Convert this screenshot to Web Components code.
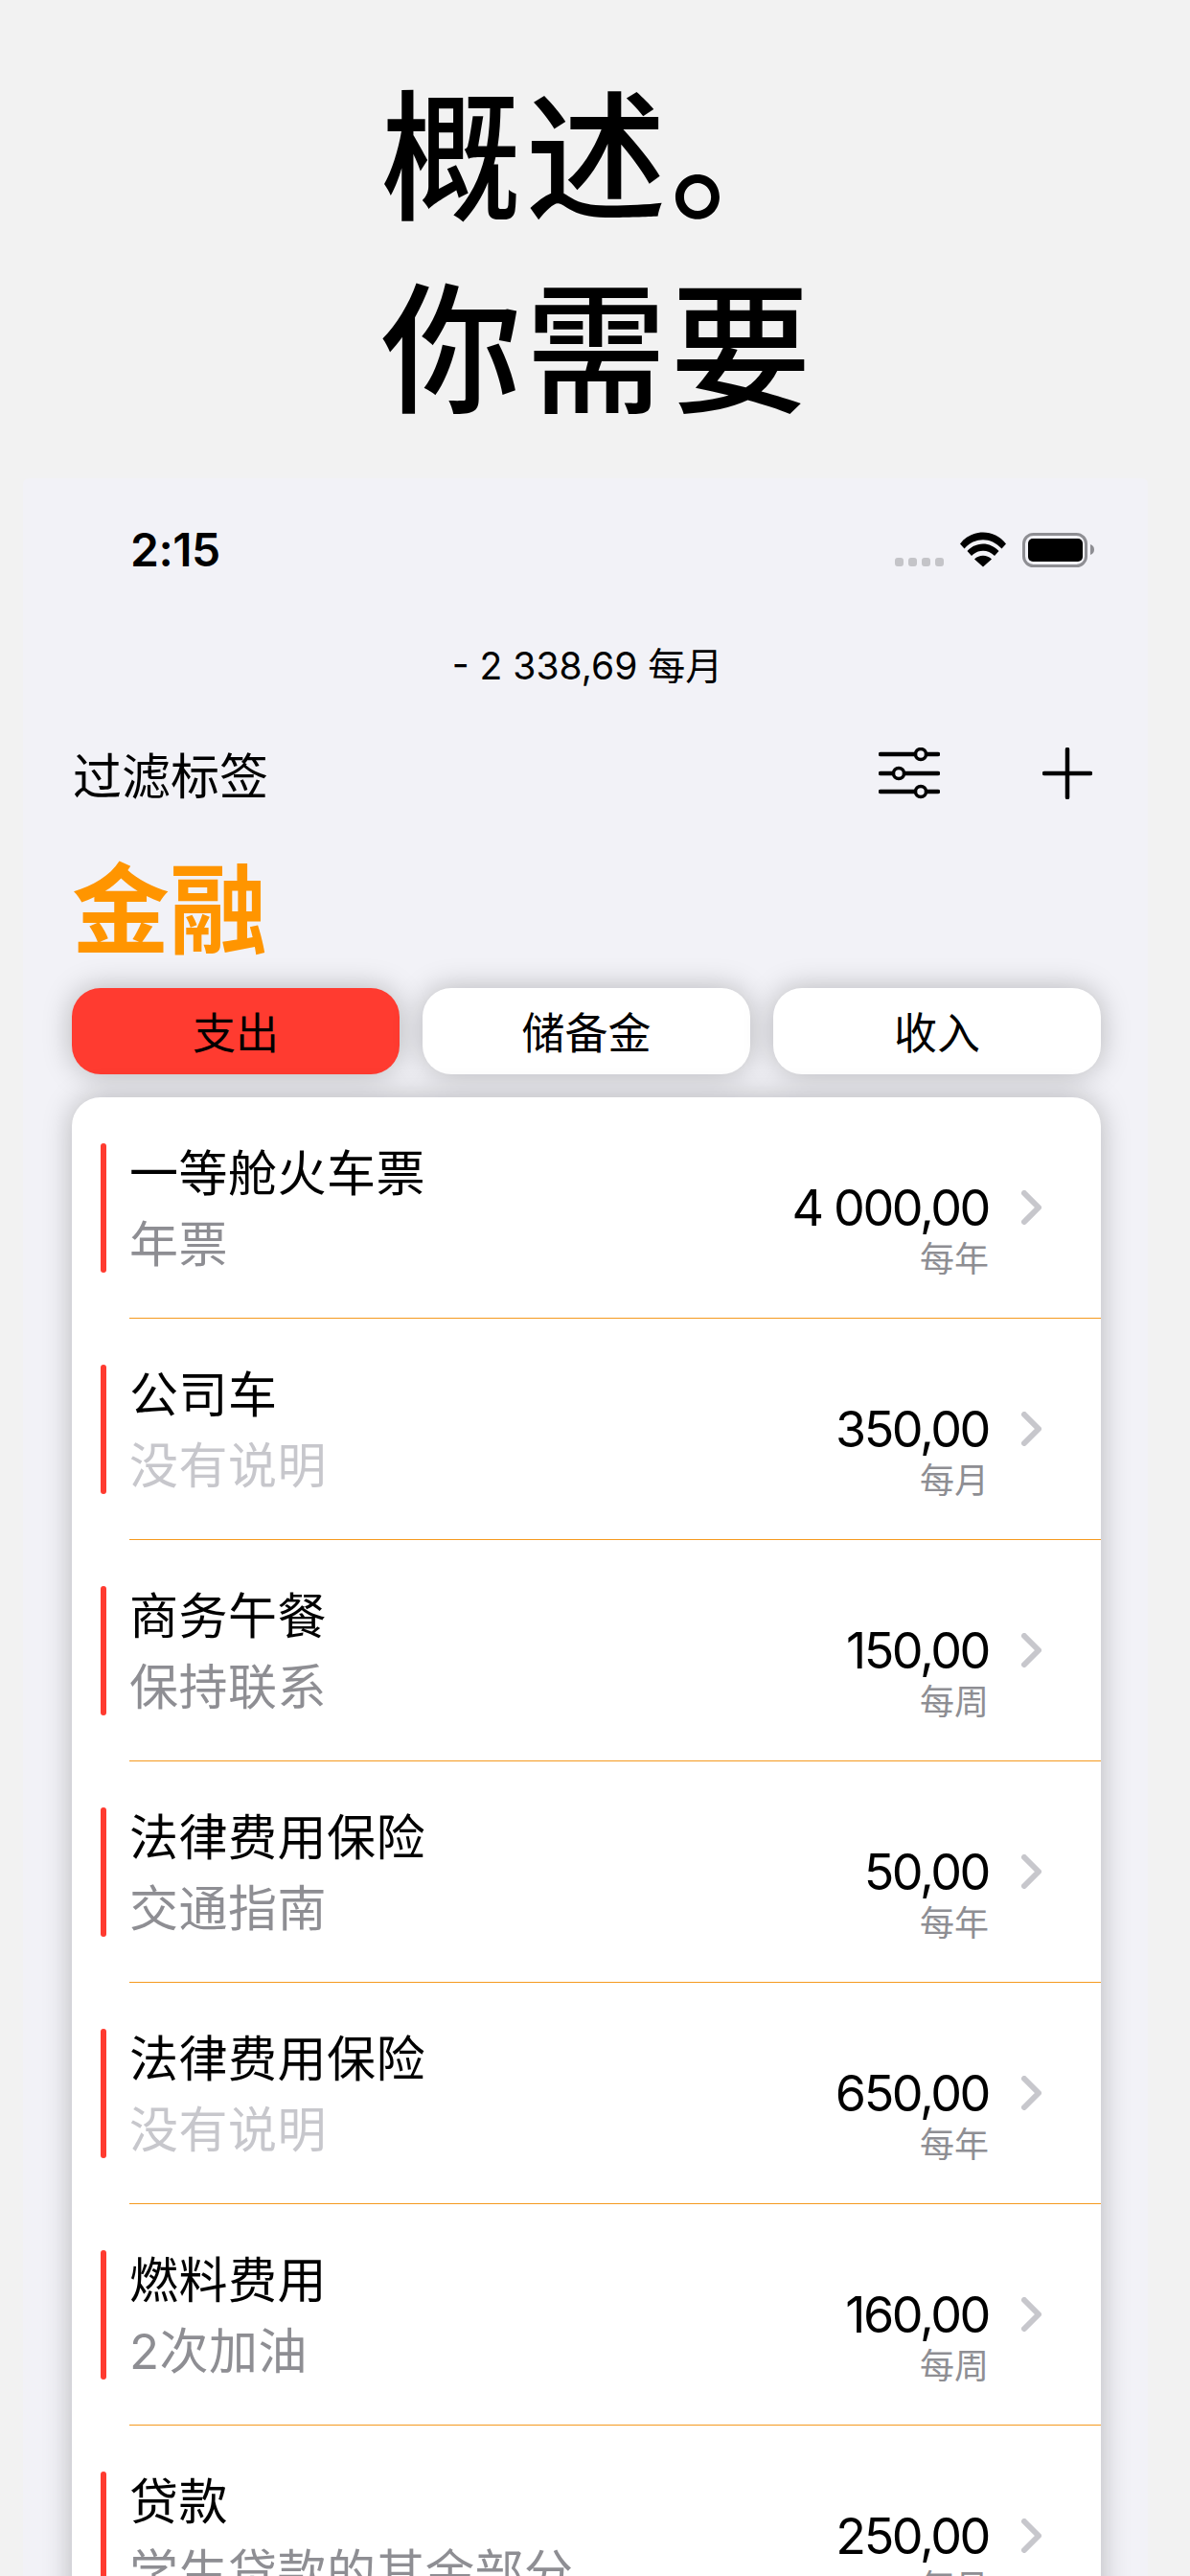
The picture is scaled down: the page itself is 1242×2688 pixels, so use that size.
<!DOCTYPE html>
<html lang="zh-CN"><head><meta charset="utf-8"><style>
html,body{margin:0;padding:0;background:#f2f2f2;height:2688px;overflow:hidden;font-family:"Noto Sans CJK SC","Liberation Sans",sans-serif}
</style></head><body>
<promo-page>
  <promo-headline slot="head"><span>概述。</span><span>你需要</span></promo-headline>
  <phone-screen slot="screen">
    <status-bar slot="status"></status-bar>
    <nav-head slot="nav"></nav-head>
    <seg-tabs slot="tabs"></seg-tabs>
    <item-list slot="list">
      <money-row title="一等舱火车票" note="年票" amount="4 000,00" period="每年"></money-row>
      <money-row title="公司车" note="没有说明" empty amount="350,00" period="每月"></money-row>
      <money-row title="商务午餐" note="保持联系" amount="150,00" period="每周"></money-row>
      <money-row title="法律费用保险" note="交通指南" amount="50,00" period="每年"></money-row>
      <money-row title="法律费用保险" note="没有说明" empty amount="650,00" period="每年"></money-row>
      <money-row title="燃料费用" note="2次加油" amount="160,00" period="每周"></money-row>
      <money-row title="贷款" note="学生贷款的其余部分" amount="250,00" period="每月"></money-row>
    </item-list>
  </phone-screen>
</promo-page>
<script>
const cjk='"Noto Sans CJK SC",sans-serif';
const sans='Inter,"Noto Sans CJK SC",sans-serif';
const def=(n,html)=>customElements.define(n,class extends HTMLElement{connectedCallback(){if(this.shadowRoot)return;const r=this.attachShadow({mode:"open"});r.innerHTML=html;}});
def("promo-page",`<style>:host{display:block;height:2688px;overflow:hidden;background:#f2f2f2}
.h{display:block;height:499px}.s{display:block;padding:0 44px 0 24px}</style><div class="h"><slot name="head"></slot></div><div class="s"><slot name="screen"></slot></div>`);
def("promo-headline",`<style>:host{display:flex;flex-direction:column;align-items:center;box-sizing:border-box;padding:53px 0 0 6px;font:500 147px/201px ${cjk};letter-spacing:4px;color:#000}
::slotted(span){display:block;width:453px;white-space:nowrap}</style><slot></slot>`);
def("phone-screen",`<style>:host{display:block;background:#f2f2f7;height:2189px;border-radius:6px 6px 0 0;overflow:hidden}
</style><slot name="status"></slot><slot name="nav"></slot><slot name="tabs"></slot><slot name="list"></slot>`);
def("status-bar",`<style>:host{display:flex;align-items:flex-start;justify-content:space-between;height:150px;padding:0 56px 0 112px;box-sizing:border-box}
.t{font:600 48px/54px ${sans};margin-top:48px;color:#000;letter-spacing:-.5px}
svg{margin-top:56px;display:block}</style>
<span class="t">2:15</span>
<svg width="208" height="38" viewBox="0 0 208 38"><g fill="#c4c4c8"><rect x="0" y="27" width="9" height="9" rx="3"/><rect x="14" y="27" width="9" height="9" rx="3"/><rect x="28" y="27" width="9" height="9" rx="3"/><rect x="42" y="27" width="9" height="9" rx="3"/></g>
<path d="M68 12.500C80 -3.500 104 -3.500 116 12.500L111.500 17.500C100 5 84 5 72.500 17.500Z M75.500 20C85 10 99 10 108.500 20L104 25C97 18 87 18 80 25Z M83 28.500C88 23.500 96 23.500 101 28.500L92 36.500Z" fill="#000"/>
<rect x="134.500" y="2.500" width="65" height="33" rx="10" fill="none" stroke="#8e8e93" stroke-width="3"/><rect x="139" y="7" width="57" height="24" rx="5" fill="#000"/><path d="M204 13c3 1 4 3 4 5.500s-1 4.500-4 5.500z" fill="#8e8e93"/></svg>`);
def("nav-head",`<style>:host{display:block;padding:0 58px 0 51px}
.sum{font:400 39px/46px ${sans};text-align:center;color:#000;margin:23px -11px 0 0}
.bar{display:flex;align-items:center;justify-content:space-between;margin-top:59px;height:60px}
.f{font:400 51px/60px ${cjk};color:#000;margin-left:1px}
.i{display:flex;gap:107px;align-items:center}
svg{display:block}
h1{margin:47px 0 0 0;font:700 102px/118px ${cjk};color:#ff9500}
</style><div class="sum">- 2 338,69 每月</div>
<div class="bar"><span class="f">过滤标签</span><span class="i">
<svg width="64" height="54" viewBox="0 0 64 54" fill="none" stroke="#000" stroke-width="4.500" stroke-linecap="round"><path d="M2 7H38M51 7H62M2 27H15M28 27H62M2 46H38M51 46H62"/><g fill="#f2f2f7" stroke-width="3.500"><circle cx="44" cy="7" r="5.500"/><circle cx="21" cy="27" r="5.500"/><circle cx="44" cy="46" r="5.500"/></g></svg>
<svg width="52" height="54" viewBox="0 0 52 54" fill="none" stroke="#000" stroke-width="4.500" stroke-linecap="round"><path d="M26 2V52M2 27H50"/></svg></span></div>
<h1>金融</h1>`);
def("seg-tabs",`<style>:host{display:flex;gap:24px;padding:0 49px 0 51px;margin-top:29px;position:relative;z-index:1}
.b{flex:1;height:90px;border-radius:30px;background:#fff;display:flex;align-items:center;justify-content:center;font:400 45px/52px ${cjk};color:#000;box-shadow:0 0 30px rgba(0,0,0,.25)}
.a{background:#ff3b30}</style><div class="b a">支出</div><div class="b">储备金</div><div class="b">收入</div>`);
def("item-list",`<style>:host{display:block;margin:24px 49px 0 51px;background:#fff;border-radius:30px 30px 0 0;box-shadow:0 0 30px rgba(0,0,0,.25);position:relative;z-index:2}</style><slot></slot>`);
customElements.define("money-row",class extends HTMLElement{connectedCallback(){if(this.shadowRoot)return;const a=k=>this.getAttribute(k);const r=this.attachShadow({mode:"open"});
r.innerHTML=`<style>:host{display:block}
.r{display:flex;align-items:flex-start;height:231px;box-sizing:border-box;padding:48px 0 0 30px;position:relative}
.bar{width:6px;height:135px;border-radius:3px;background:#ff3b30;flex:none}
.l{flex:1;margin-left:24px;min-width:0}
.t{font:400 51px/60px ${cjk};letter-spacing:.5px;color:#000;white-space:nowrap;margin-top:-2px}
.n{font:400 51px/60px ${sans};letter-spacing:.5px;color:${this.hasAttribute("empty")?"#c7c7cc":"#8e8e93"};white-space:nowrap;margin-top:18px}
.m{display:flex;flex-direction:column;align-items:flex-end;margin-top:38px}
.a{font:400 52px/60px ${sans};letter-spacing:-2.400px;color:#000;white-space:nowrap}
.p{font:400 36px/40px ${cjk};color:#8e8e93;margin-top:0}
svg{flex:none;margin:49px 62px 0 34px;display:block}
.d{position:absolute;left:60px;right:0;bottom:0;height:1px;background:#f59a1f}
</style><div class="r"><div class="bar"></div><div class="l"><div class="t">${a("title")}</div><div class="n">${a("note")}</div></div>
<div class="m"><div class="a">${a("amount")}</div><div class="p">${a("period")}</div></div>
<svg width="21" height="36" viewBox="0 0 21 36" fill="none" stroke="#c7c7cc" stroke-width="6" stroke-linecap="round" stroke-linejoin="round"><path d="M3 3L18 18L3 33"/></svg>
<div class="d"></div></div>`;}});
</script></body></html>
